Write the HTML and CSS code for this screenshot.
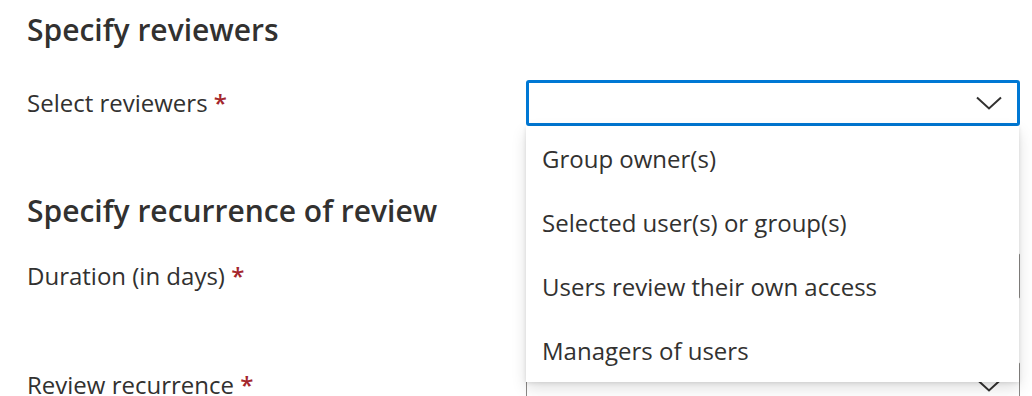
FILE: index.html
```html
<!DOCTYPE html>
<html lang="en">
<head>
<meta charset="utf-8">
<title>Access review settings</title>
<link rel="stylesheet" href="styles.css">
</head>
<body>
<main class="page">
  <section class="section">
    <h2 class="section-title">Specify reviewers</h2>
    <div class="field first">
      <label class="field-label">Select reviewers <span class="req">*</span></label>
      <div class="field-control">
        <div class="dropdown is-open">
          <span class="dropdown-value"></span>
          <svg class="chevron" width="26" height="14" viewBox="0 0 26 14" aria-hidden="true"><polyline points="1,1.5 13,12.5 25,1.5" fill="none" stroke="#323130" stroke-width="2"/></svg>
        </div>
        <ul class="menu" role="listbox">
          <li class="menu-item">Group owner(s)</li>
          <li class="menu-item">Selected user(s) or group(s)</li>
          <li class="menu-item">Users review their own access</li>
          <li class="menu-item">Managers of users</li>
        </ul>
      </div>
    </div>
  </section>
  <section class="section second">
    <h2 class="section-title">Specify recurrence of review</h2>
    <div class="field duration">
      <label class="field-label">Duration (in days) <span class="req">*</span></label>
      <div class="field-control">
        <div class="textbox"></div>
      </div>
    </div>
    <div class="field recurrence">
      <label class="field-label">Review recurrence <span class="req">*</span></label>
      <div class="field-control">
        <div class="dropdown">
          <span class="dropdown-value"></span>
          <svg class="chevron" width="26" height="14" viewBox="0 0 26 14" aria-hidden="true"><polyline points="1,1.5 13,12.5 25,1.5" fill="none" stroke="#323130" stroke-width="2"/></svg>
        </div>
      </div>
    </div>
  </section>
</main>
</body>
</html>
```
FILE: styles.css
```css
html {
  overflow: hidden;
  background: #ffffff;
}
body {
  margin: 0;
  padding: 0;
  font-family: "Open Sans", "Noto Sans", "Liberation Sans", sans-serif;
  color: #323130;
}
.page {
  padding: 11px 12px 40px 27px;
}
.section-title {
  margin: 0;
  font-size: 30px;
  font-weight: 600;
  line-height: 38px;
  color: #323130;
}
.field {
  display: flex;
  align-items: center;
}
.field.first {
  margin-top: 31px;
}
.field.duration {
  margin-top: 23px;
}
.field.recurrence {
  margin-top: 63px;
}
.field-label {
  width: 499px;
  flex: none;
  font-size: 24px;
  line-height: 30px;
}
.req {
  color: #a4262c;
  font-weight: 600;
}
.field-control {
  position: relative;
  flex: 1;
}
.dropdown {
  height: 46px;
  box-sizing: border-box;
  border: 1px solid #8a8886;
  border-radius: 2px;
  display: flex;
  align-items: center;
  justify-content: flex-end;
  padding-right: 17px;
}
.dropdown.is-open {
  border: 3px solid #0078d4;
  padding-right: 15px;
  border-radius: 3px;
}
.textbox {
  height: 46px;
  box-sizing: border-box;
  border: 1px solid #8a8886;
  border-radius: 2px;
}
.menu {
  position: absolute;
  top: 100%;
  left: 0;
  right: 1px;
  margin: 0;
  padding: 0;
  list-style: none;
  background: #ffffff;
  box-shadow: 0 6px 14px rgba(0,0,0,0.13), 0 1px 4px rgba(0,0,0,0.11);
  z-index: 10;
}
.menu-item {
  height: 64px;
  display: flex;
  align-items: center;
  padding-left: 16px;
  font-size: 24px;
}
.second {
  margin-top: 66px;
}
```
